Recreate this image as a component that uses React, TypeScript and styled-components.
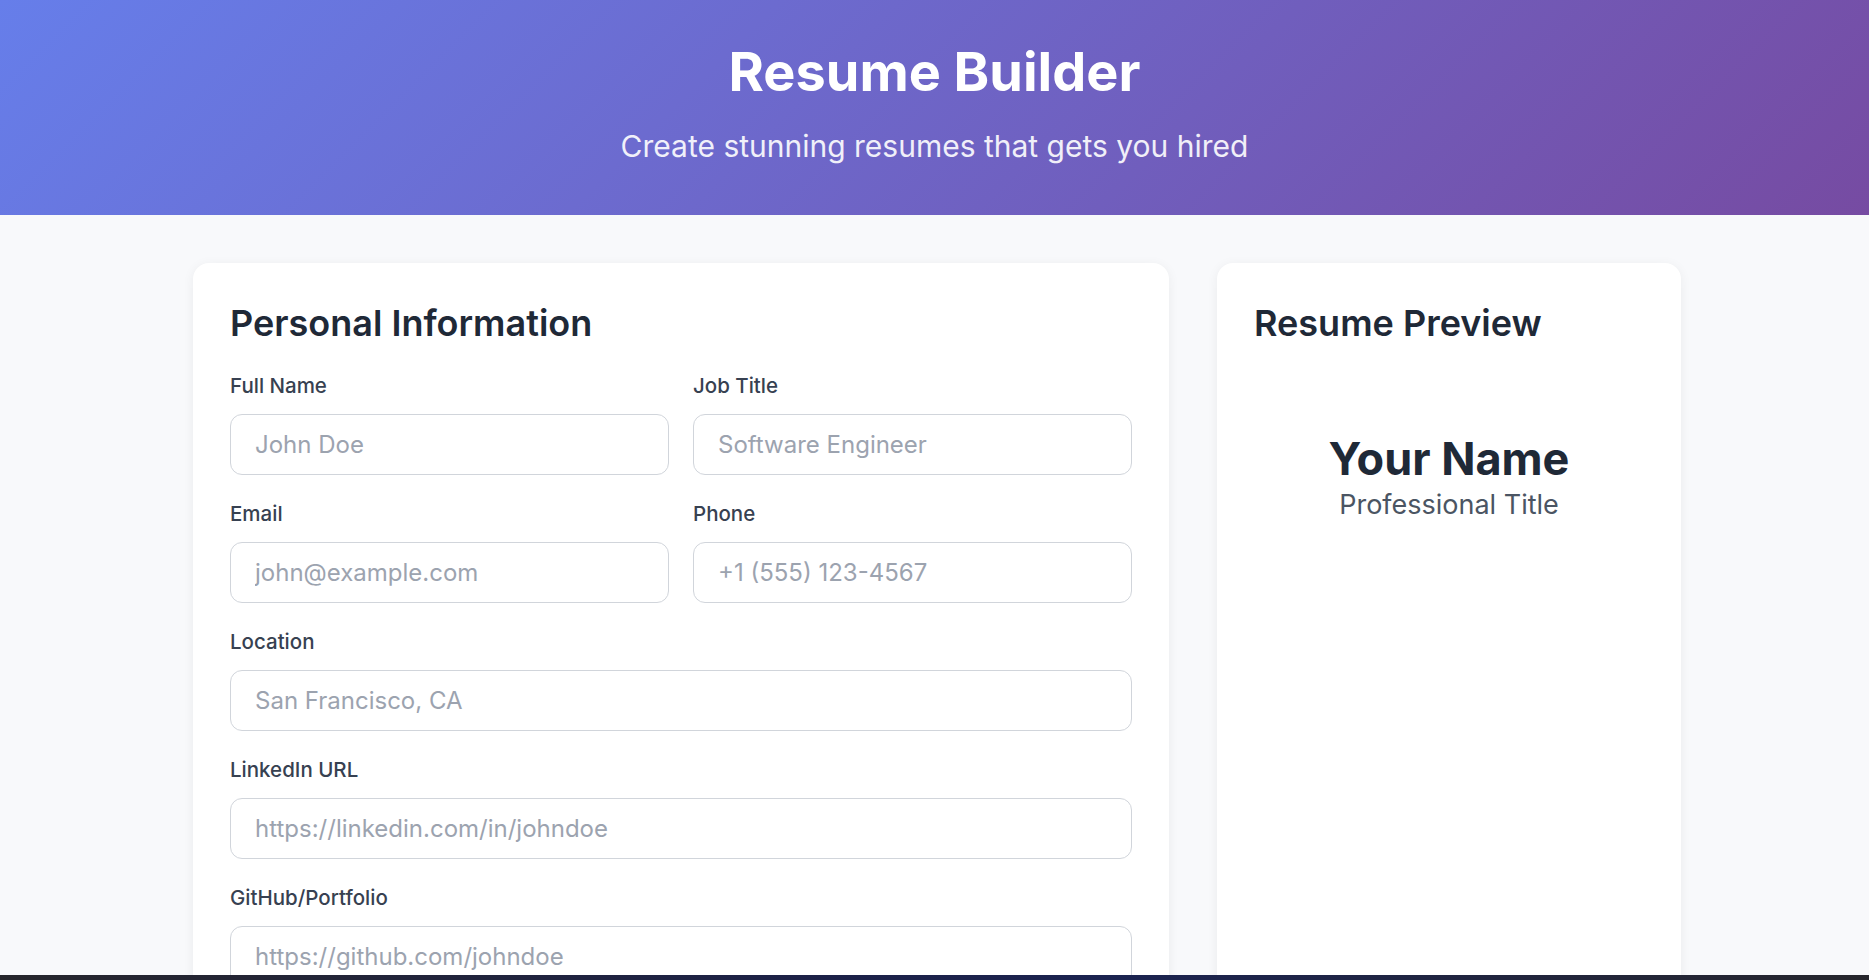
import React from "react";
import styled, { createGlobalStyle } from "styled-components";

const Global = createGlobalStyle`
  * { box-sizing: border-box; }
  html, body { margin: 0; padding: 0; }
  body {
    background: #f8f9fb;
    font-family: Inter, "Noto Sans", "Liberation Sans", sans-serif;
    color: #1f2937;
  }
`;

const Header = styled.header`
  background: linear-gradient(135deg, #667eea 0%, #764ba2 100%);
  color: #ffffff;
  text-align: center;
  padding: 39px 0 51px;
`;

const Title = styled.h1`
  margin: 0 0 24px;
  font-size: 54px;
  font-weight: 700;
  line-height: normal;
`;

const Subtitle = styled.p`
  margin: 0;
  font-size: 30px;
  font-weight: 400;
  line-height: normal;
  opacity: 0.9;
`;

const Main = styled.main`
  display: grid;
  grid-template-columns: 976px 464px;
  gap: 48px;
  justify-content: center;
  padding: 48px 0 48px 5px;
`;

const Card = styled.section`
  background: #ffffff;
  border-radius: 16px;
  box-shadow: 0 2px 12px rgba(15, 23, 42, 0.06);
  padding: 38px 37px 40px;
`;

const CardTitle = styled.h2`
  margin: 0 0 28px;
  font-size: 36px;
  font-weight: 600;
  line-height: normal;
  color: #1f2937;
`;

const FieldGrid = styled.div`
  display: grid;
  grid-template-columns: 1fr 1fr;
  column-gap: 24px;
  row-gap: 26px;
`;

const Field = styled.div<{ $full?: boolean }>`
  display: flex;
  flex-direction: column;
  grid-column: ${(p) => (p.$full ? "1 / -1" : "auto")};
`;

const Label = styled.label`
  font-size: 20.5px;
  font-weight: 500;
  line-height: normal;
  color: #374151;
  margin-bottom: 16px;
`;

const Input = styled.input`
  height: 61px;
  width: 100%;
  border: 1.5px solid #d1d5db;
  border-radius: 12px;
  padding: 0 24px;
  font-family: inherit;
  font-size: 24px;
  color: #1f2937;
  background: #ffffff;
  outline: none;
  &::placeholder {
    color: #9ca3af;
  }
`;

const TextArea = styled.textarea`
  min-height: 160px;
  width: 100%;
  border: 1.5px solid #d1d5db;
  border-radius: 12px;
  padding: 16px 24px;
  font-family: inherit;
  font-size: 24px;
  resize: vertical;
  &::placeholder {
    color: #9ca3af;
  }
`;

const Preview = styled.div`
  text-align: center;
  padding-top: 58px;
`;

const PreviewName = styled.div`
  font-size: 45px;
  font-weight: 700;
  line-height: normal;
  color: #1f2937;
`;

const PreviewTitle = styled.div`
  font-size: 27px;
  font-weight: 400;
  line-height: normal;
  color: #4b5563;
  margin-top: 2px;
`;

const BottomBar = styled.div`
  position: fixed;
  left: 0;
  right: 0;
  bottom: 0;
  height: 5px;
  background: linear-gradient(90deg, #26262c 0%, #1c2148 45%, #1b2350 60%, #26262c 100%);
`;

export default function App() {
  return (
    <>
      <Global />
      <Header>
        <Title>Resume Builder</Title>
        <Subtitle>Create stunning resumes that gets you hired</Subtitle>
      </Header>
      <Main>
        <Card>
          <CardTitle>Personal Information</CardTitle>
          <FieldGrid>
            <Field>
              <Label>Full Name</Label>
              <Input placeholder="John Doe" />
            </Field>
            <Field>
              <Label>Job Title</Label>
              <Input placeholder="Software Engineer" />
            </Field>
            <Field>
              <Label>Email</Label>
              <Input placeholder="john@example.com" />
            </Field>
            <Field>
              <Label>Phone</Label>
              <Input placeholder="+1 (555) 123-4567" />
            </Field>
            <Field $full>
              <Label>Location</Label>
              <Input placeholder="San Francisco, CA" />
            </Field>
            <Field $full>
              <Label>LinkedIn URL</Label>
              <Input placeholder="https://linkedin.com/in/johndoe" />
            </Field>
            <Field $full>
              <Label>GitHub/Portfolio</Label>
              <Input placeholder="https://github.com/johndoe" />
            </Field>
            <Field $full>
              <Label>Professional Summary</Label>
              <TextArea placeholder="Write a brief summary of your experience and goals..." />
            </Field>
          </FieldGrid>
        </Card>
        <Card>
          <CardTitle>Resume Preview</CardTitle>
          <Preview>
            <PreviewName>Your Name</PreviewName>
            <PreviewTitle>Professional Title</PreviewTitle>
          </Preview>
        </Card>
      </Main>
      <BottomBar />
    </>
  );
}
